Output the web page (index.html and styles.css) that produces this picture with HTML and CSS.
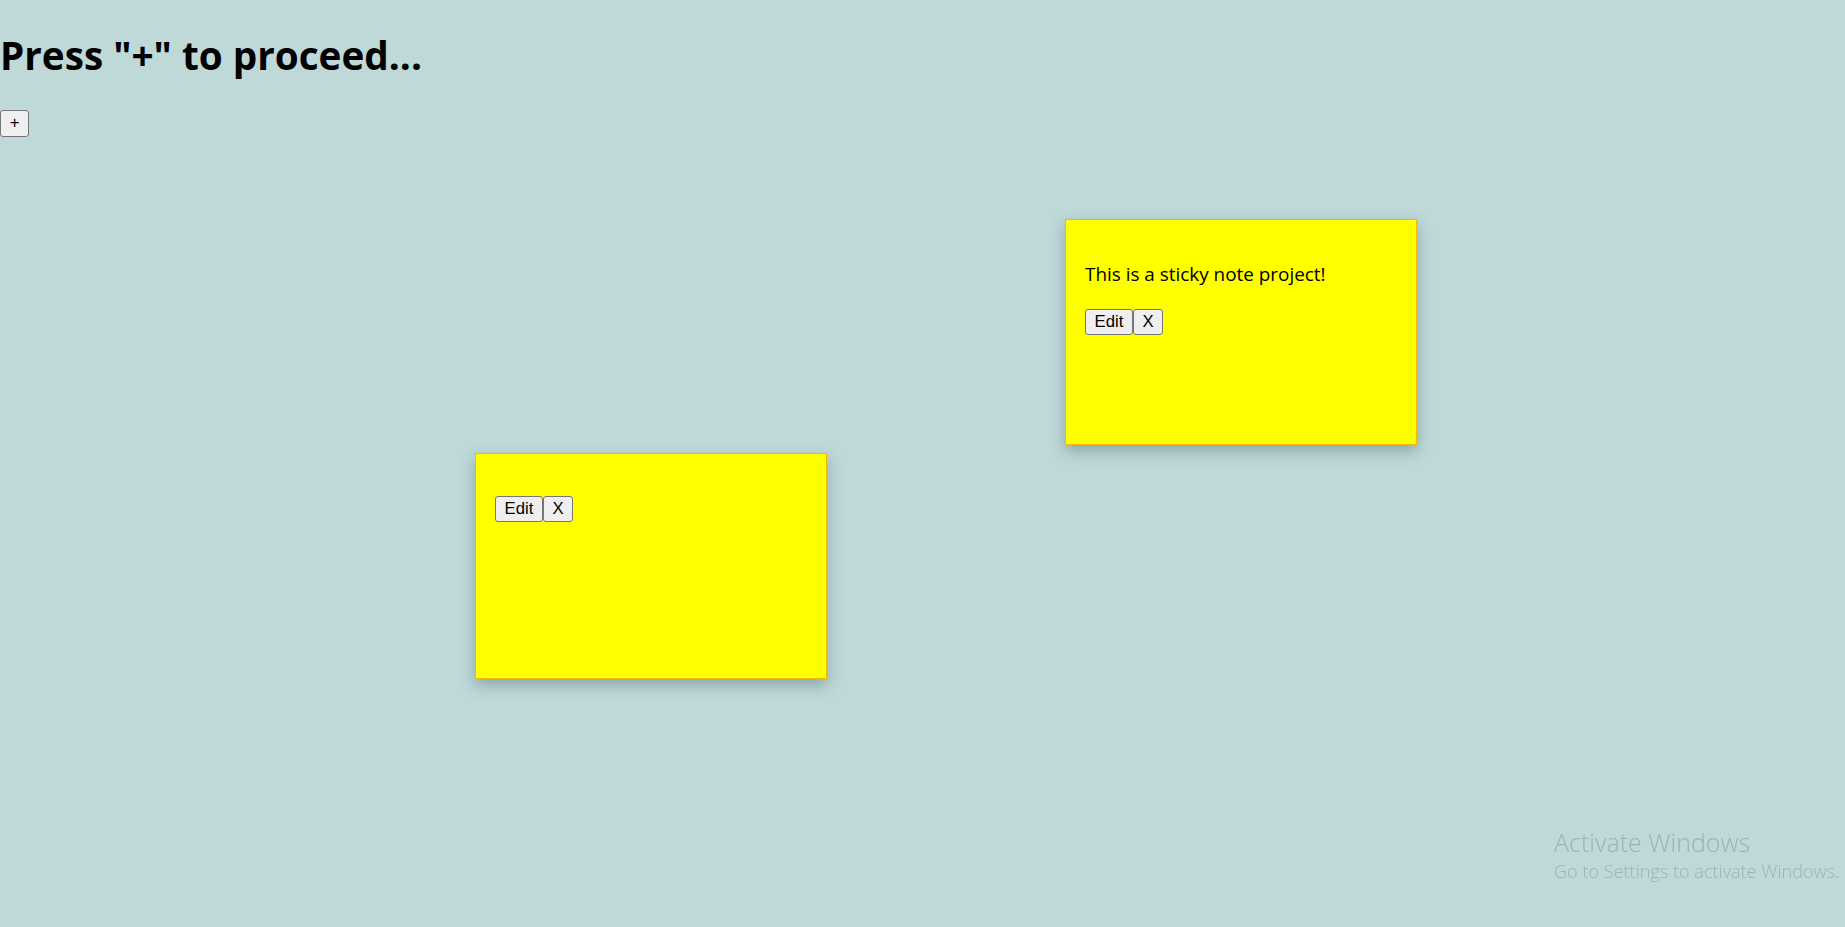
FILE: index.html
```html
<!DOCTYPE html>
<html lang="en">
<head>
<meta charset="utf-8">
<title>Sticky Notes</title>
<link rel="stylesheet" href="styles.css">
</head>
<body>
  <h1 class="title">Press "+" to proceed...</h1>
  <div class="toolbar"><button class="btn btn-add">+</button></div>

  <div class="board">
    <div class="note note-a">
      <p class="note-text">This is a sticky note project!</p>
      <div class="note-actions"><button class="btn btn-edit">Edit</button><button class="btn btn-close">X</button></div>
    </div>
    <div class="note note-b">
      <p class="note-text"></p>
      <div class="note-actions"><button class="btn btn-edit">Edit</button><button class="btn btn-close">X</button></div>
    </div>
  </div>

  <div class="watermark">
    <div class="wm-title">Activate Windows</div>
    <div class="wm-sub">Go to Settings to activate Windows.</div>
  </div>
</body>
</html>
```

FILE: styles.css
```css
html, body {
  margin: 0;
  padding: 0;
}

body {
  background: #bfd9d9;
  font-family: "Segoe UI", "Open Sans", "Noto Sans", sans-serif;
  font-size: 20px;
  color: #000;
  min-height: 927px;
  overflow: hidden;
}

.title {
  margin: 29px 0 25px;
  font-size: 38.7px;
  line-height: 53px;
  font-weight: 700;
  white-space: nowrap;
}

.toolbar {
  display: flex;
  padding-top: 3px;
}

.btn {
  font-family: "Liberation Sans", Arial, sans-serif;
  font-size: 16.7px;
  line-height: 1;
  color: #000;
  background: #efefef;
  border: 1px solid #767676;
  border-radius: 3px;
  box-sizing: border-box;
  height: 26px;
  padding: 0;
  margin: 0;
  display: flex;
  align-items: center;
  justify-content: center;
}

.btn-add {
  width: 29px;
  height: 27px;
  font-size: 16.7px;
}

.btn-edit {
  width: 48px;
}

.btn-close {
  width: 30px;
}

.note {
  position: absolute;
  box-sizing: border-box;
  width: 352px;
  height: 226px;
  padding: 19px;
  background: #ffff00;
  border: 1px solid #f5b800;
  box-shadow: 0 6px 14px rgba(40, 70, 70, 0.35);
}

.note-a {
  left: 1065px;
  top: 219px;
}

.note-b {
  left: 475px;
  top: 453px;
}

.note-text {
  margin: 23px 0;
  font-size: 18.9px;
  line-height: 24px;
}

.note-actions {
  display: flex;
}

.watermark {
  position: fixed;
  left: 1554px;
  top: 826px;
  color: rgba(120, 130, 130, 0.45);
  white-space: nowrap;
}

.wm-title {
  font-size: 25px;
  line-height: 33px;
  font-weight: 300;
}

.wm-sub {
  font-size: 18.1px;
  line-height: 24px;
  font-weight: 300;
}
```
